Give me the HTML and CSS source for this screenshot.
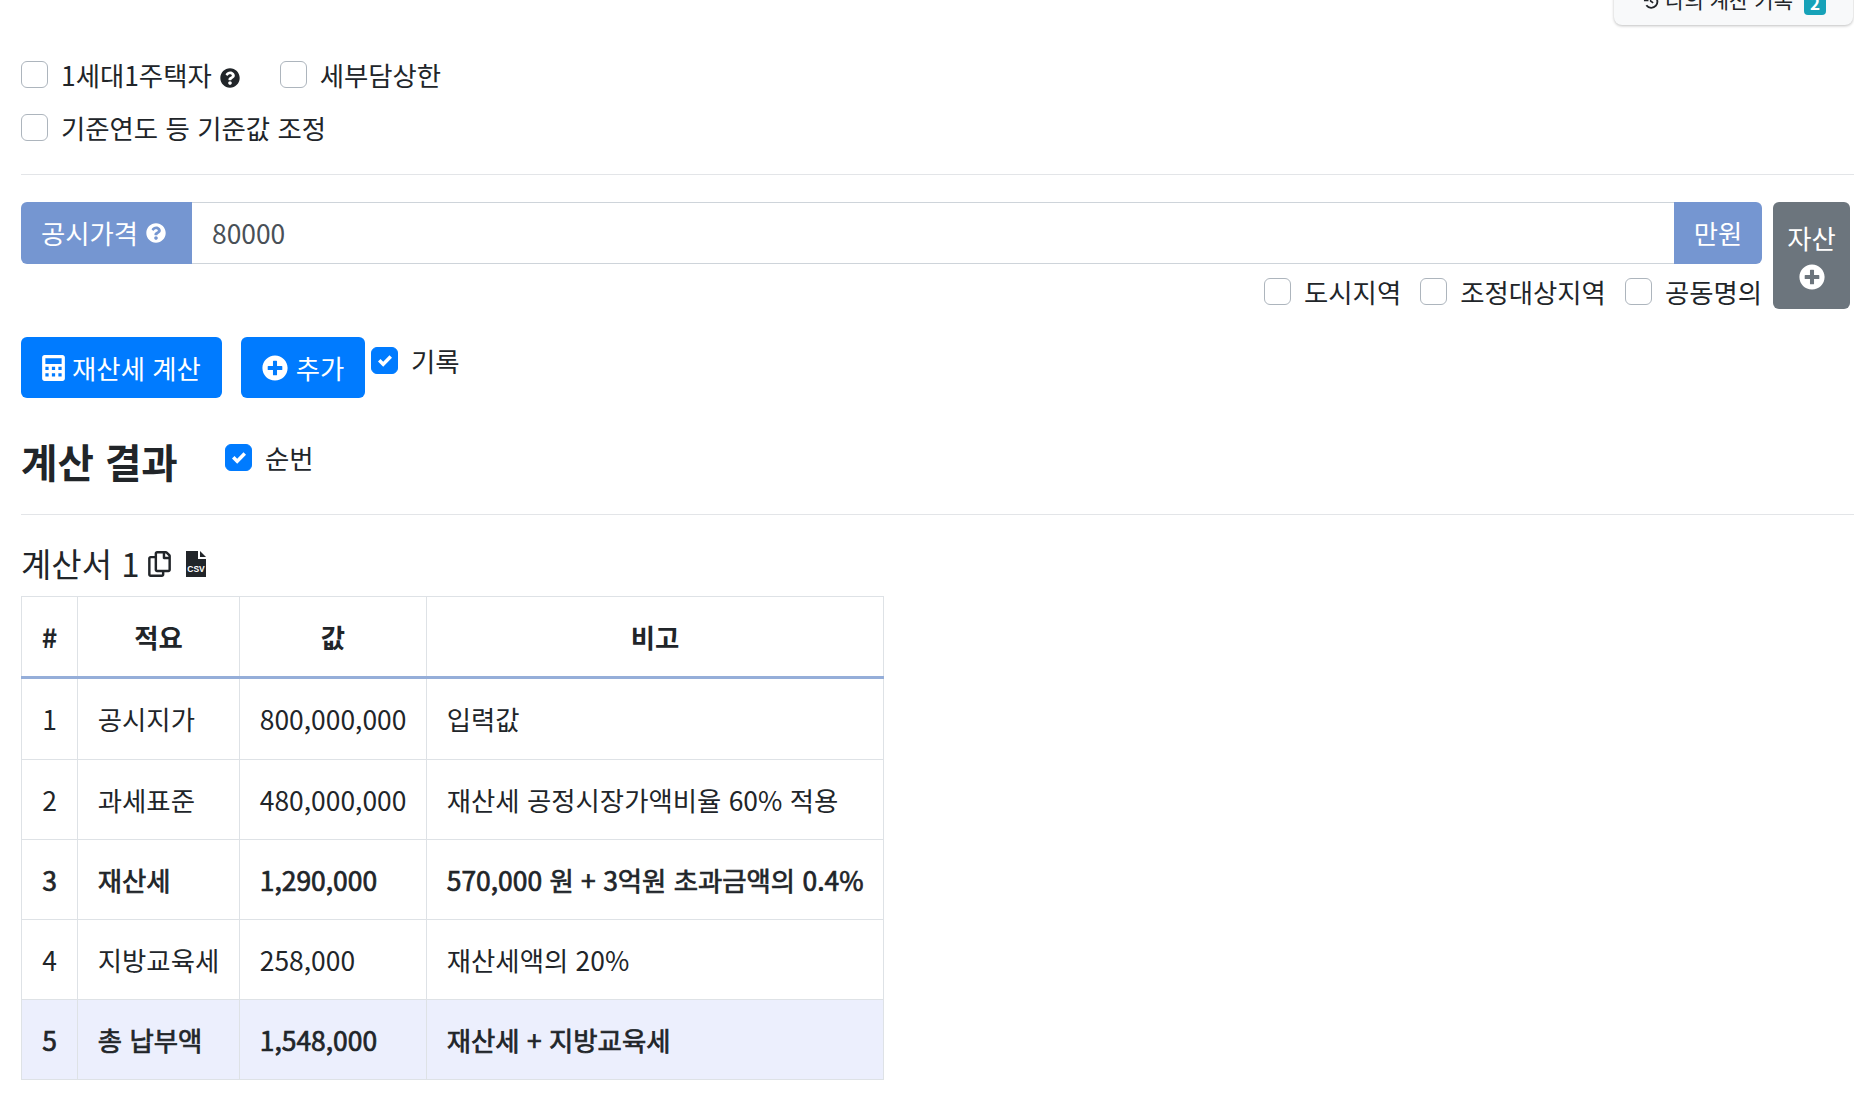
FILE: index.html
```html
<!DOCTYPE html>
<html lang="ko">
<head>
<meta charset="utf-8">
<title>재산세 계산</title>
<link rel="stylesheet" href="styles.css">
</head>
<body>
<svg class="defs" width="0" height="0" aria-hidden="true">
  <symbol id="q" viewBox="0 0 512 512"><path d="M504 256c0 136.997-111.043 248-248 248S8 392.997 8 256C8 119.083 119.043 8 256 8s248 111.083 248 248zM262.655 90c-54.497 0-89.255 22.957-116.549 63.758-3.536 5.286-2.353 12.415 2.715 16.258l34.699 26.31c5.205 3.947 12.621 3.008 16.665-2.122 17.864-22.658 30.113-35.797 57.303-35.797 20.429 0 45.698 13.148 45.698 32.958 0 14.976-12.363 22.667-32.534 33.976C247.128 238.528 216 254.941 216 296v4c0 6.627 5.373 12 12 12h56c6.627 0 12-5.373 12-12v-1.333c0-28.462 83.186-29.647 83.186-106.667 0-58.002-60.165-102-116.531-102zM256 338c-25.365 0-46 20.635-46 46 0 25.364 20.635 46 46 46s46-20.636 46-46c0-25.365-20.635-46-46-46z"/></symbol>
  <symbol id="plus" viewBox="0 0 512 512"><path d="M256 8C119 8 8 119 8 256s111 248 248 248 248-111 248-248S393 8 256 8zm144 276c0 6.6-5.4 12-12 12h-92v92c0 6.6-5.4 12-12 12h-56c-6.6 0-12-5.4-12-12v-92h-92c-6.6 0-12-5.4-12-12v-56c0-6.6 5.4-12 12-12h92v-92c0-6.6 5.4-12 12-12h56c6.6 0 12 5.4 12 12v92h92c6.6 0 12 5.4 12 12v56z"/></symbol>
  <symbol id="check" viewBox="0 0 8 8"><path fill="#fff" d="M6.564.75l-3.59 3.612-1.538-1.55L0 4.26l2.974 2.99L8 2.193z"/></symbol>
</svg>

<main class="page">
  <div class="history-bar">
    <button class="history-btn" type="button">
      <svg class="ico-history" viewBox="0 0 24 24" aria-hidden="true"><path d="M4 6v5h5M4.600 11A8.500 8.500 0 1 1 6 18" fill="none" stroke="currentColor" stroke-width="2.600"/><path d="M12 7v5l3.500 2.500" fill="none" stroke="currentColor" stroke-width="2.200"/></svg>
      나의 계산 기록 <span class="badge">2</span>
    </button>
  </div>

  <div class="opt-row opt-row-first">
    <label class="check"><span class="box"></span><span class="check-text">1세대1주택자 <svg class="ico-q"><use href="#q"/></svg></span></label>
    <label class="check"><span class="box"></span><span class="check-text">세부담상한</span></label>
  </div>
  <div class="opt-row">
    <label class="check"><span class="box"></span><span class="check-text">기준연도 등 기준값 조정</span></label>
  </div>

  <hr class="rule rule-a">

  <div class="price-row">
    <div class="price-main">
      <div class="input-group">
        <span class="addon addon-left">공시가격 <svg class="ico-q-w"><use href="#q"/></svg></span>
        <div class="input">80000</div>
        <span class="addon addon-right">만원</span>
      </div>
      <div class="sub-opts">
        <label class="check"><span class="box"></span><span class="check-text">도시지역</span></label>
        <label class="check"><span class="box"></span><span class="check-text">조정대상지역</span></label>
        <label class="check"><span class="box"></span><span class="check-text">공동명의</span></label>
      </div>
    </div>
    <button class="asset-btn" type="button">자산<svg class="ico-plus-asset"><use href="#plus"/></svg></button>
  </div>

  <div class="actions">
    <button class="btn btn-calc" type="button">
      <svg class="ico-calc" viewBox="0 0 448 512" aria-hidden="true"><path fill-rule="evenodd" d="M400 0H48C22 0 0 22 0 48v416c0 26 22 48 48 48h352c26 0 48-22 48-48V48c0-26-22-48-48-48zM64 64h320v112H64zM64 232h64v64H64zm128 0h64v64h-64zm128 0h64v64h-64zM64 360h64v64H64zm128 0h64v64h-64zm128 0h64v64h-64z"/></svg>
      재산세 계산
    </button>
    <button class="btn btn-add" type="button"><svg class="ico-plus"><use href="#plus"/></svg> 추가</button>
    <label class="check check-log"><span class="box box-on"><svg class="tick"><use href="#check"/></svg></span><span class="check-text">기록</span></label>
  </div>

  <div class="result-head">
    <h2 class="result-title">계산 결과</h2>
    <label class="check check-seq"><span class="box box-on"><svg class="tick"><use href="#check"/></svg></span><span class="check-text">순번</span></label>
  </div>

  <hr class="rule rule-b">

  <h5 class="sheet-title">계산서 1
    <svg class="ico-copy" viewBox="0 0 448 512" aria-hidden="true"><path d="M433.941 65.941l-51.882-51.882A48 48 0 0 0 348.118 0H176c-26.51 0-48 21.49-48 48v48H48c-26.51 0-48 21.49-48 48v320c0 26.51 21.49 48 48 48h224c26.51 0 48-21.49 48-48v-48h80c26.51 0 48-21.49 48-48V99.882a48 48 0 0 0-14.059-33.941zM266 464H54a6 6 0 0 1-6-6V150a6 6 0 0 1 6-6h74v224c0 26.51 21.49 48 48 48h96v42a6 6 0 0 1-6 6zm128-96H182a6 6 0 0 1-6-6V54a6 6 0 0 1 6-6h106v88c0 13.255 10.745 24 24 24h88v202a6 6 0 0 1-6 6zm6-256h-64V48h9.632c1.591 0 3.117.632 4.243 1.757l48.368 48.368a6 6 0 0 1 1.757 4.243V112z"/></svg>
    <svg class="ico-csv" viewBox="0 0 20 26" aria-hidden="true"><path d="M0 0h12v8h8v18H0z"/><path d="M14 0l6 6h-6z"/><text x="10" y="20.500" text-anchor="middle" class="csv-text">CSV</text></svg>
  </h5>

  <table class="result-table">
    <colgroup><col class="c1"><col class="c2"><col class="c3"><col class="c4"></colgroup>
    <thead>
      <tr><th>#</th><th>적요</th><th>값</th><th>비고</th></tr>
    </thead>
    <tbody>
      <tr><td class="num">1</td><td>공시지가</td><td>800,000,000</td><td>입력값</td></tr>
      <tr><td class="num">2</td><td>과세표준</td><td>480,000,000</td><td>재산세 공정시장가액비율 60% 적용</td></tr>
      <tr class="strong"><td class="num">3</td><td>재산세</td><td>1,290,000</td><td>570,000 원 + 3억원 초과금액의 0.4%</td></tr>
      <tr><td class="num">4</td><td>지방교육세</td><td>258,000</td><td>재산세액의 20%</td></tr>
      <tr class="strong total"><td class="num">5</td><td>총 납부액</td><td>1,548,000</td><td>재산세 + 지방교육세</td></tr>
    </tbody>
  </table>
</main>
</body>
</html>
```
FILE: styles.css
```css
html { font-size: 26.4px; }
* { box-sizing: border-box; }
body {
  margin: 0;
  height: 1093px;
  overflow: hidden;
  background: #fff;
  color: #212529;
  font-family: "Noto Sans CJK KR", "Noto Sans", sans-serif;
  font-size: 26.4px;
  line-height: 1.5;
}
.defs { position: absolute; }
.page { padding-left: 21px; }

.history-bar { display: flex; justify-content: flex-end; height: 25px; }
.history-btn {
  display: flex; align-items: flex-end; gap: 4px;
  height: 50px; margin-top: -25px; width: 239px; margin-right: 1px;
  padding: 0 27px 10px 28px; border: 0; border-radius: 0 0 8px 8px;
  background: #f8f9fa; color: #212529; box-shadow: 0 1px 3px rgba(0,0,0,.25);
  font: inherit; font-size: 21px; white-space: nowrap;
}
.ico-history { width: 18px; height: 18px; margin-right: 2px; margin-bottom: 5px; }
.badge {
  display: inline-block; margin-left: 7px; padding: 0 6px; border-radius: 4px;
  background: #17a2b8; color: #fff; font-size: 17px; font-weight: 700; line-height: 24px;
}

.opt-row { display: flex; gap: 40px; height: 53px; align-items: center; }
.opt-row-first { margin-top: 23px; }
.check { display: inline-flex; align-items: center; white-space: nowrap; }
.box {
  flex: none; width: 27px; height: 27px; margin-right: 13px;
  border: 1px solid #adb5bd; border-radius: 6px; background: #fff;
  display: inline-flex; align-items: center; justify-content: center;
}
.box-on { background: #007bff; border-color: #007bff; }
.tick { width: 14px; height: 14px; }
.check-text { display: inline-flex; align-items: center; gap: 8px; }
.ico-q { width: 20px; height: 20px; fill: #212529; margin-top: 7px; }

.rule { border: 0; border-top: 1px solid #e3e5e8; margin: 0; }
.rule-a { margin-top: 20px; }
.rule-b { margin-top: 0; }

.price-row { display: flex; gap: 11px; margin-top: 27px; padding-right: 4px; }
.price-main { flex: 1; min-width: 0; }
.input-group { display: flex; height: 62px; }
.addon {
  display: flex; align-items: center; flex: none;
  background: #7596d1; color: #fff;
}
.addon-left { width: 171px; padding-left: 20px; border-radius: 6px 0 0 6px; gap: 8px; }
.addon-right { width: 88px; justify-content: center; border-radius: 0 6px 6px 0; }
.ico-q-w { width: 20px; height: 20px; fill: #fff; }
.input {
  flex: 1; display: flex; align-items: center; padding: 0 20px;
  border: 1px solid #ced4da; border-width: 1px 0; color: #495057;
}
.sub-opts { display: flex; justify-content: flex-end; gap: 19px; height: 55px; align-items: center; }
.asset-btn {
  flex: none; width: 77px; height: 107px; padding: 16px 0 0; border: 0; border-radius: 6px;
  background: #6c757d; color: #fff; font: inherit;
  display: flex; flex-direction: column; align-items: center; gap: 6px;
}
.ico-plus-asset { width: 26px; height: 26px; fill: #fff; }

.actions { display: flex; align-items: flex-start; margin-top: 18px; }
.btn {
  display: inline-flex; align-items: center; justify-content: center; height: 61px;
  border: 0; border-radius: 6px; background: #007bff; color: #fff; font: inherit;
}
.btn-calc { width: 201px; gap: 7px; }
.btn-add { width: 124px; margin-left: 19px; margin-right: 6px; gap: 8px; }
.ico-calc { width: 23px; height: 26px; fill: #fff; }
.ico-plus { width: 26px; height: 26px; fill: #fff; }
.check-log { margin-top: 4px; }

.result-head { display: flex; align-items: flex-start; margin-top: 40px; height: 76px; }
.result-title { margin: 0; font-size: 39.6px; font-weight: 700; line-height: 46px; width: 204px; }
.check-seq { margin-top: 0; }

.sheet-title {
  display: flex; align-items: center; margin: 14px 0 0; font-size: 33px; font-weight: 400; line-height: 46px; gap: 8px;
  height: 67px;
}
.ico-copy { width: 23px; height: 26px; fill: #212529; margin-top: 3px; }
.ico-csv { width: 20px; height: 26px; fill: #212529; margin-top: 3px; margin-left: 7px; }
.csv-text { fill: #fff; font-family: "Liberation Sans", sans-serif; font-size: 8.5px; font-weight: 700; }

.result-table { border-collapse: collapse; width: 862px; table-layout: fixed; }
.c1 { width: 56px; } .c2 { width: 162px; } .c3 { width: 187px; } .c4 { width: 457px; }
.result-table th, .result-table td { border: 1px solid #dee2e6; padding: 0 19.8px; height: 80px; white-space: nowrap; }
.result-table th { text-align: center; font-weight: 700; height: 81px; border-bottom: 3px solid #95aed9; }
.result-table tbody tr:first-child td { height: 82px; }
.result-table td.num { text-align: center; padding: 0; }
.strong td { -webkit-text-stroke: 0.7px #212529; }
.total td { background: #eceffd; }
```
